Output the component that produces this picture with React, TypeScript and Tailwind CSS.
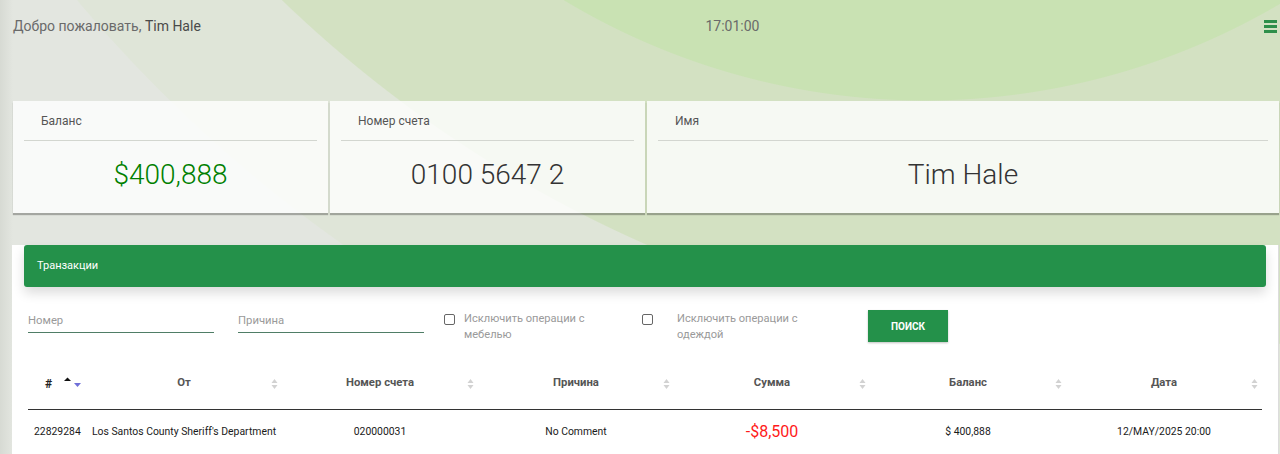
import React from "react";

function SortIcon() {
  return (
    <svg width="7" height="12" viewBox="0 0 7 12" className="absolute right-[4px] top-1/2 -translate-y-1/2">
      <path d="M3.5 1 L6.5 5 L0.5 5 Z" fill="#d2d2d2" />
      <path d="M3.5 11 L6.5 7 L0.5 7 Z" fill="#d2d2d2" />
    </svg>
  );
}

function StatCard({ label, value, green }: { label: string; value: string; green?: boolean }) {
  return (
    <div className="bg-white/80 shadow-[0_2px_1px_rgba(0,0,0,0.28)] pt-[13px] px-[11px] pb-[21px]">
      <div className="pl-[17px] text-[12px] leading-[14px] text-[#555]">{label}</div>
      <div className="mt-[12px] h-px bg-[#d3d6d0]" />
      <div
        className={
          "mt-[17px] text-center text-[28px] leading-[34px] font-light " +
          (green ? "text-[#008000]" : "text-[#333]")
        }
      >
        {value}
      </div>
    </div>
  );
}

export default function App() {
  const cols = ["От", "Номер счета", "Причина", "Сумма", "Баланс", "Дата"];
  return (
    <div
      className="min-h-[454px] font-['Roboto','Liberation_Sans',sans-serif] bg-[linear-gradient(to_right,rgba(150,155,145,0.16),rgba(150,155,145,0)_13px),radial-gradient(circle_at_925px_-600px,#c9e2b3_700px,transparent_701px),radial-gradient(circle_at_1150px_-900px,#d3e1c2_1250px,transparent_1251px),radial-gradient(circle_at_1150px_-900px,#dfe5d8_1400px,transparent_1401px),linear-gradient(#e3e6e0,#e3e6e0)] overflow-hidden"
    >
      {/* Top bar */}
      <div className="h-[52px] flex items-center justify-between pl-[13px] pr-[3px]">
        <div className="text-[14px] text-[#6a6a6a]">
          Добро пожаловать, <span className="text-[#4a4a4a]">Tim Hale</span>
        </div>
        <div className="text-[14px] text-[#6a6a6a]">17:01:00</div>
        <div className="flex flex-col gap-[2px] w-[13px]">
          <div className="h-[3px] bg-[#2e8f4a]" />
          <div className="h-[3px] bg-[#2e8f4a]" />
          <div className="h-[3px] bg-[#2e8f4a]" />
        </div>
      </div>

      {/* Stat cards */}
      <div className="mt-[49px] pl-[13px] pr-[1px] grid grid-cols-[315px_315px_1fr] gap-[2px]">
        <StatCard label="Баланс" value="$400,888" green />
        <StatCard label="Номер счета" value="0100 5647 2" />
        <StatCard label="Имя" value="Tim Hale" />
      </div>

      {/* Transactions */}
      <div className="mt-[48px] ml-[12px] mr-[1px] bg-white border-r border-[#dcdcdc] pb-[10px]">
        <div className="-mt-[16px] mx-[12px] h-[42px] rounded-[3px] bg-[#24914a] shadow-[0_6px_12px_rgba(0,0,0,0.14)] flex items-center pl-[13px]">
          <span className="text-[11px] text-white">Транзакции</span>
        </div>

        <div className="mt-[23px] pl-[16px] flex items-start">
          <div className="w-[186px] h-[23px] pt-[4px] border-b border-[#4f7d66] text-[11.3px] leading-[14px] text-[#9a9a9a]">
            Номер
          </div>
          <div className="ml-[24px] w-[186px] h-[23px] pt-[4px] border-b border-[#4f7d66] text-[11.3px] leading-[14px] text-[#9a9a9a]">
            Причина
          </div>
          <div className="ml-[20px] mt-[4px] w-[11px] h-[11px] border border-[#666] rounded-[2px] bg-white" />
          <div className="ml-[9px] mt-[1px] w-[150px] text-[11.1px] leading-[16px] text-[#9a9a9a]">
            Исключить операции с мебелью
          </div>
          <div className="ml-[28px] mt-[4px] w-[11px] h-[11px] border border-[#666] rounded-[2px] bg-white" />
          <div className="ml-[24px] mt-[1px] w-[150px] text-[11.1px] leading-[16px] text-[#9a9a9a]">
            Исключить операции с одеждой
          </div>
          <div className="ml-[41px] w-[80px] h-[32px] bg-[#24914a] shadow-[0_1px_2px_rgba(0,0,0,0.25)] flex items-center justify-center text-[10px] font-bold text-white">
            ПОИСК
          </div>
        </div>

        <div className="mt-[15px] mx-[16px]">
          <div className="grid grid-cols-[58px_repeat(6,196px)] h-[52px] border-b border-[#333] items-center text-[11.3px] font-bold text-[#555]">
            <div className="relative h-full flex items-center pl-[17px] text-[#222] text-[12px]">
              #
              <svg width="18" height="12" viewBox="0 0 18 12" className="absolute left-[36px] top-[19px]">
                <path d="M3.5 0.5 L7 4 L0 4 Z" fill="#111" />
                <path d="M13.5 10 L17 6 L10 6 Z" fill="#6f6fd8" />
              </svg>
            </div>
            {cols.map((c) => (
              <div key={c} className="relative h-full flex items-center justify-center">
                {c}
                <SortIcon />
              </div>
            ))}
          </div>
          <div className="grid grid-cols-[58px_repeat(6,196px)] h-[44px] items-center text-[10.4px] text-[#1a1a1a]">
            <div className="pl-[6px]">22829284</div>
            <div className="text-center">Los Santos County Sheriff's Department</div>
            <div className="text-center">020000031</div>
            <div className="text-center">No Comment</div>
            <div className="text-center text-[16px] text-[#ff1a1a]">-$8,500</div>
            <div className="text-center">$ 400,888</div>
            <div className="text-center">12/MAY/2025 20:00</div>
          </div>
        </div>
      </div>
    </div>
  );
}
